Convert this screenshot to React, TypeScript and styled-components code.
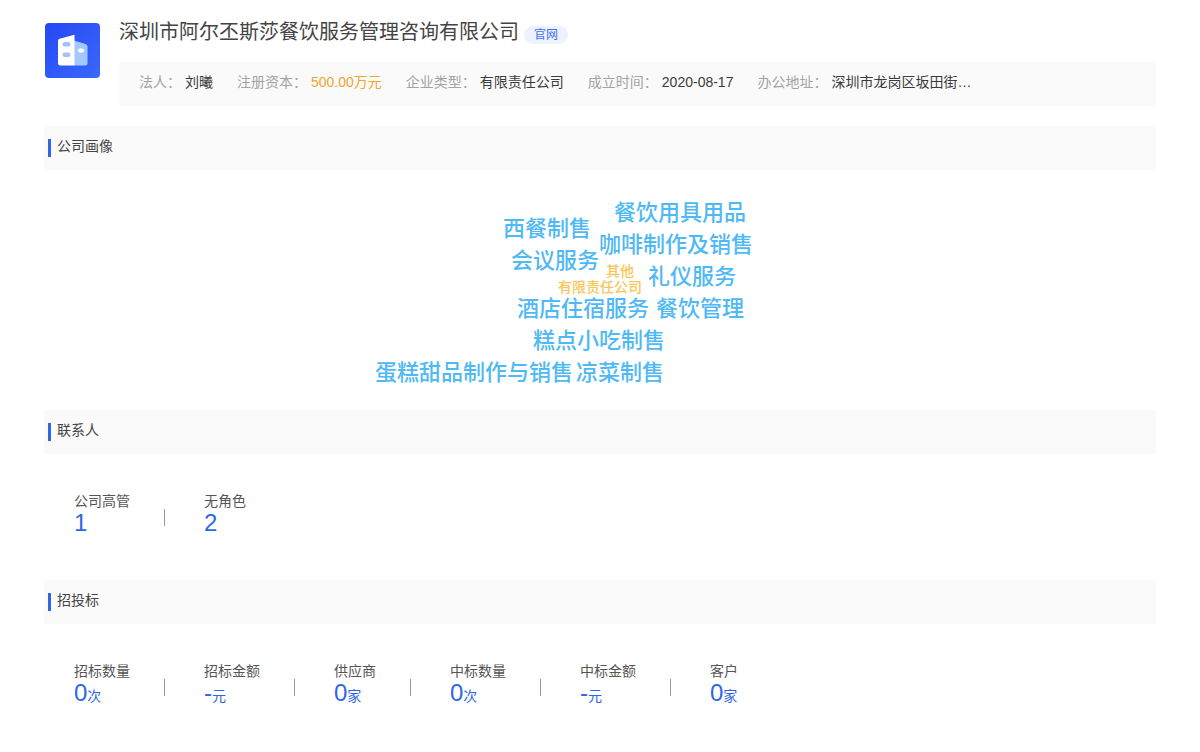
import React from "react";
import styled, { createGlobalStyle } from "styled-components";

const GlobalStyle = createGlobalStyle`
  * { box-sizing: border-box; }
  body {
    margin: 0;
    background: #fff;
    color: #444;
    font-family: "Liberation Sans", "Noto Sans CJK SC", sans-serif;
    font-size: 14px;
    line-height: 20px;
  }
  h1, h2, dl, dt, dd { margin: 0; font-weight: 400; }
`;

const Page = styled.main`
  padding: 20px 44px 32px;
`;

const Header = styled.header`
  display: flex;
  align-items: flex-start;
  gap: 19px;
  margin-bottom: 20px;
`;

const Logo = styled.svg`
  flex: none;
  width: 56px;
  height: 56px;
  margin-top: 2px;
`;

const HeaderBody = styled.div`
  flex: 1;
  min-width: 0;
`;

const TitleRow = styled.div`
  display: flex;
  align-items: center;
  gap: 5px;
  height: 24px;
  margin-bottom: 18px;
`;

const Title = styled.h1`
  font-size: 20px;
  line-height: 24px;
  color: #444;
`;

const SiteLink = styled.a`
  margin-top: 6px;
  padding: 0 10px;
  border-radius: 9px;
  background: #edf2fe;
  color: #3f70f0;
  font-size: 12px;
  line-height: 18px;
  text-decoration: none;
`;

const InfoBar = styled.dl`
  display: flex;
  flex-wrap: wrap;
  gap: 0 24px;
  padding: 10px 20px 14px;
  background: #fafafa;
`;

const InfoItem = styled.div`
  display: flex;
  gap: 4px;
`;

const InfoLabel = styled.dt`
  color: #a3a3a3;
`;

const InfoValue = styled.dd<{ $accent?: boolean }>`
  color: ${(p) => (p.$accent ? "#f0a62f" : "#3a3a3a")};
`;

const SectionHeader = styled.div`
  display: flex;
  align-items: center;
  height: 44px;
  padding: 0 4px;
  background: #fafafa;
`;

const SectionMark = styled.span`
  width: 3px;
  height: 18px;
  margin-right: 6px;
  background: #2f66e8;
`;

const SectionTitle = styled.h2`
  padding-bottom: 4px;
  font-size: 14px;
  line-height: 20px;
`;

const Cloud = styled.div`
  position: relative;
  height: 240px;
`;

const Word = styled.span<{ $x: number; $y: number; $small?: boolean }>`
  position: absolute;
  left: calc(50% + ${(p) => p.$x}px);
  top: ${(p) => p.$y}px;
  color: ${(p) => (p.$small ? "#f8c555" : "#4fb9f5")};
  font-size: ${(p) => (p.$small ? 14 : 22)}px;
  font-family: "Liberation Sans", "Noto Sans CJK SC Medium", "Noto Sans CJK SC", sans-serif;
  font-weight: 500;
  line-height: ${(p) => (p.$small ? 16 : 32)}px;
  white-space: nowrap;
`;

const Stats = styled.dl`
  display: flex;
  padding: 37px 30px 45px;
`;

const Stat = styled.div`
  display: flex;
  align-items: center;

  & + &::before {
    content: "";
    width: 1px;
    height: 17px;
    margin: 8px 39px 0 34px;
    background: #999;
  }
`;

const StatLabel = styled.dt`
  color: #555;
`;

const StatValue = styled.dd`
  color: #2f66e8;
  font-size: 24px;
  line-height: 24px;
`;

const Unit = styled.span`
  font-size: 14px;
  line-height: 14px;
`;

type StatData = { label: string; value: string; unit?: string };

const info = [
  { label: "法人：", value: "刘曦" },
  { label: "注册资本：", value: "500.00万元", accent: true },
  { label: "企业类型：", value: "有限责任公司" },
  { label: "成立时间：", value: "2020-08-17" },
  { label: "办公地址：", value: "深圳市龙岗区坂田街…" },
];

const words = [
  { text: "餐饮用具用品", x: 14, y: 27 },
  { text: "西餐制售", x: -97, y: 43 },
  { text: "咖啡制作及销售", x: -1, y: 59 },
  { text: "会议服务", x: -89, y: 75 },
  { text: "其他", x: 6, y: 93, small: true },
  { text: "礼仪服务", x: 48, y: 91 },
  { text: "有限责任公司", x: -42, y: 109, small: true },
  { text: "酒店住宿服务", x: -83, y: 123 },
  { text: "餐饮管理", x: 56, y: 123 },
  { text: "糕点小吃制售", x: -67, y: 155 },
  { text: "蛋糕甜品制作与销售", x: -225, y: 187 },
  { text: "凉菜制售", x: -24, y: 187 },
];

const contacts: StatData[] = [
  { label: "公司高管", value: "1" },
  { label: "无角色", value: "2" },
];

const bids: StatData[] = [
  { label: "招标数量", value: "0", unit: "次" },
  { label: "招标金额", value: "-", unit: "元" },
  { label: "供应商", value: "0", unit: "家" },
  { label: "中标数量", value: "0", unit: "次" },
  { label: "中标金额", value: "-", unit: "元" },
  { label: "客户", value: "0", unit: "家" },
];

function Section({ title, children }: { title: string; children: React.ReactNode }) {
  return (
    <section>
      <SectionHeader>
        <SectionMark />
        <SectionTitle>{title}</SectionTitle>
      </SectionHeader>
      {children}
    </section>
  );
}

function StatList({ items }: { items: StatData[] }) {
  return (
    <Stats>
      {items.map((s) => (
        <Stat key={s.label}>
          <div>
            <StatLabel>{s.label}</StatLabel>
            <StatValue>
              {s.value}
              {s.unit && <Unit>{s.unit}</Unit>}
            </StatValue>
          </div>
        </Stat>
      ))}
    </Stats>
  );
}

function CompanyLogo() {
  return (
    <Logo viewBox="0 0 56 56" aria-hidden="true">
      <defs>
        <linearGradient id="tile" x1="0" y1="0" x2="1" y2="1">
          <stop offset="0" stopColor="#2548f5" />
          <stop offset="1" stopColor="#3a68fb" />
        </linearGradient>
      </defs>
      <rect x="1" y="1" width="55" height="55" rx="4" fill="url(#tile)" />
      <path d="M30 18.500L41.500 22Q43.500 22.700 43.500 24.500V41Q43.500 43.500 41 43.500H30Z" fill="#a3c8fb" />
      <path d="M30.500 12.800V43.500H16.500Q14 43.500 14 41V19Q14 17.300 15.600 16.800Z" fill="#fff" />
      <rect x="18.500" y="20" width="8" height="4.400" rx="2.200" fill="#a3c0f8" />
      <rect x="18.500" y="30.500" width="8" height="4.400" rx="2.200" fill="#a3c0f8" />
      <rect x="34" y="26.500" width="6" height="4" rx="2" fill="#fff" />
    </Logo>
  );
}

export default function App() {
  return (
    <Page>
      <GlobalStyle />
      <Header>
        <CompanyLogo />
        <HeaderBody>
          <TitleRow>
            <Title>深圳市阿尔丕斯莎餐饮服务管理咨询有限公司</Title>
            <SiteLink href="#">官网</SiteLink>
          </TitleRow>
          <InfoBar>
            {info.map((i) => (
              <InfoItem key={i.label}>
                <InfoLabel>{i.label}</InfoLabel>
                <InfoValue $accent={i.accent}>{i.value}</InfoValue>
              </InfoItem>
            ))}
          </InfoBar>
        </HeaderBody>
      </Header>
      <Section title="公司画像">
        <Cloud>
          {words.map((w) => (
            <Word key={w.text} $x={w.x} $y={w.y} $small={w.small}>
              {w.text}
            </Word>
          ))}
        </Cloud>
      </Section>
      <Section title="联系人">
        <StatList items={contacts} />
      </Section>
      <Section title="招投标">
        <StatList items={bids} />
      </Section>
    </Page>
  );
}
